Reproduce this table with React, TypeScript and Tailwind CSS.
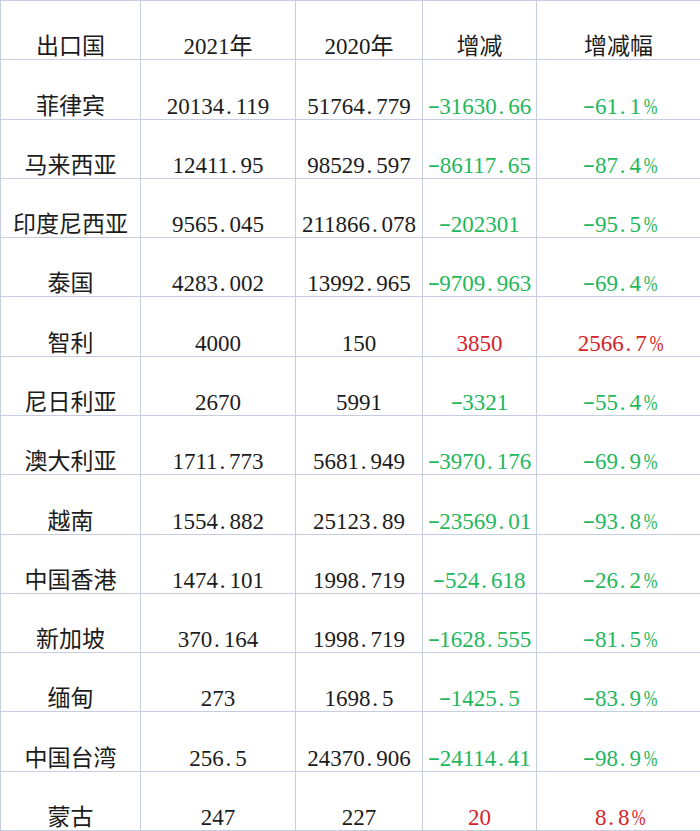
import React from "react";

type Row = [string, string, string, string, string, boolean];

const rows: Row[] = [
  ["菲律宾", "20134.119", "51764.779", "-31630.66", "-61.1%", false],
  ["马来西亚", "12411.95", "98529.597", "-86117.65", "-87.4%", false],
  ["印度尼西亚", "9565.045", "211866.078", "-202301", "-95.5%", false],
  ["泰国", "4283.002", "13992.965", "-9709.963", "-69.4%", false],
  ["智利", "4000", "150", "3850", "2566.7%", true],
  ["尼日利亚", "2670", "5991", "-3321", "-55.4%", false],
  ["澳大利亚", "1711.773", "5681.949", "-3970.176", "-69.9%", false],
  ["越南", "1554.882", "25123.89", "-23569.01", "-93.8%", false],
  ["中国香港", "1474.101", "1998.719", "-524.618", "-26.2%", false],
  ["新加坡", "370.164", "1998.719", "-1628.555", "-81.5%", false],
  ["缅甸", "273", "1698.5", "-1425.5", "-83.9%", false],
  ["中国台湾", "256.5", "24370.906", "-24114.41", "-98.9%", false],
  ["蒙古", "247", "227", "20", "8.8%", true],
];

function Txt({ s }: { s: string }) {
  const parts: React.ReactNode[] = [];
  let buf = "";
  const flush = (k: string) => {
    if (buf) {
      parts.push(<span key={k}>{buf}</span>);
      buf = "";
    }
  };
  Array.from(s).forEach((ch, i) => {
    if (ch === ".") {
      flush("b" + i);
      parts.push(
        <span key={i} className="inline-block w-[0.5em] text-left pl-[0.08em]">
          .
        </span>
      );
    } else if (ch === "-") {
      flush("b" + i);
      parts.push(
        <span key={i} className="inline-block w-[0.5em] text-center">
          <span className="inline-block scale-x-[1.6] -translate-y-[1px]">-</span>
        </span>
      );
    } else if (ch === "%") {
      flush("b" + i);
      parts.push(
        <span key={i} className="inline-block w-[0.55em] text-center">
          <span className="inline-block scale-x-[0.72]">%</span>
        </span>
      );
    } else {
      buf += ch;
    }
  });
  flush("end");
  return <>{parts}</>;
}

function Cell({ text, color }: { text: string; color: string }) {
  return (
    <div
      className={`flex items-end justify-center border-r border-b border-[#c6cde3] pb-[1px] leading-none whitespace-nowrap ${color}`}
    >
      <span className="leading-none">
        <Txt s={text} />
      </span>
    </div>
  );
}

export default function App() {
  const header = ["出口国", "2021年", "2020年", "增减", "增减幅"];
  return (
    <div
      className="w-[700px] h-[831px] bg-white overflow-hidden text-[23px]"
      style={{ fontFamily: '"Liberation Serif", "Noto Sans CJK SC", serif' }}
    >
      <div className="grid grid-cols-[140px_155px_127px_114px_164px] grid-rows-[repeat(14,minmax(0,1fr))] h-[831px] border-l border-t border-[#c6cde3]">
        {header.map((h) => (
          <Cell key={h} text={h} color="text-[#1c1c1c]" />
        ))}
        {rows.map((r) => {
          const c = r[5] ? "text-[#d6232a]" : "text-[#1fb75c]";
          return (
            <React.Fragment key={r[0]}>
              <Cell text={r[0]} color="text-[#1c1c1c]" />
              <Cell text={r[1]} color="text-[#1c1c1c]" />
              <Cell text={r[2]} color="text-[#1c1c1c]" />
              <Cell text={r[3]} color={c} />
              <Cell text={r[4]} color={c} />
            </React.Fragment>
          );
        })}
      </div>
    </div>
  );
}
